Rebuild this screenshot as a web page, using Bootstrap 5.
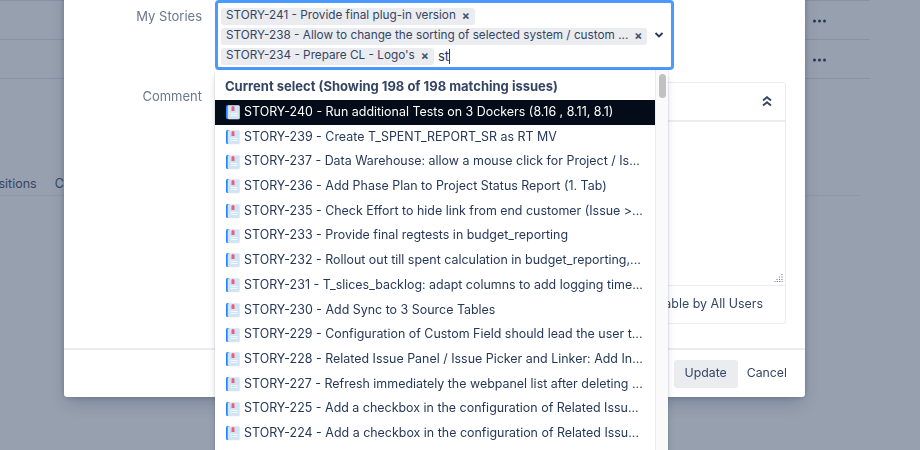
<!DOCTYPE html>
<html lang="en">
<head>
<meta charset="utf-8">
<title>Edit issue</title>
<link href="https://cdn.jsdelivr.net/npm/bootstrap@5.3.0/dist/css/bootstrap.min.css" rel="stylesheet">
<style>
html,body{height:450px;overflow:hidden}
body{background:#97a0af;font-family:Inter,"Liberation Sans",sans-serif;font-size:12.45px;color:#253858}
.bg-rows{width:870px}
.bg-row{height:39px;border-top:1px solid #8792a4;padding:18px 0 0 813px;line-height:0}
.bg-tabs{width:860px;height:39px;margin-top:40px;padding:19px 0 0;border-bottom:1px solid #8d97a7;color:#344563;overflow:hidden;white-space:nowrap;line-height:16px;font-size:12.5px}
.bg-tabs span:first-child{margin-left:-28px;margin-right:18px}
.dlg{position:fixed;left:64px;top:-20px;width:741px;height:417px;background:#fff;border-radius:3px;box-shadow:0 8px 16px -4px rgba(9,30,66,.25),0 0 5px rgba(9,30,66,.22);padding-top:20px}
.form-line{gap:13px}
.dlg-label{width:138px;text-align:right;color:#6b778c;font-size:13px;line-height:18px;flex:none}
.label-top{padding-top:7px}
.label-next{padding-top:5px}
.gap-above{margin-top:12px}
.picker{position:relative;width:459px;height:70px;border:3px solid #4c9aff;border-radius:4px;background:#fff;padding:3px 0 0 3px}
.chip{display:inline-flex;align-items:center;height:17px;background:#ebecf0;border-radius:3px;padding:0 5px;color:#344563;font-size:11.75px;white-space:nowrap;gap:6px}
.chip-line{height:20px;gap:4px}
.chip-x{font-size:12px;font-weight:700;color:#42526e;line-height:1}
.typed{font-size:13px;color:#253858;border-right:1px solid #253858;line-height:15px;height:15px}
.caret-box{position:absolute;right:7px;top:28px}
.editor{width:571px;height:242px;border:1px solid #ebecf0;border-radius:3px}
.ed-head{height:39px;border-bottom:2px solid #ebecf0;padding-right:13px}
.ed-body{height:164px;border-bottom:1px solid #ebecf0;position:relative}
.grip{position:absolute;right:2px;bottom:3px}
.ed-foot{height:37px;padding-right:22px;color:#344563;white-space:nowrap}
.dlg-foot{height:49px;border-top:2px solid #ebecf0;gap:6px;padding-right:18px;margin-top:24px}
.act{background:#ebecf0;border-radius:3px;padding:0;width:64px;height:28px;border:0;font-size:12.3px;color:#344563}
.act-link{background:none;border:0;padding:0 0 0 3px;font-size:12.3px;color:#344563}
.drop{position:fixed;left:215px;top:70px;width:453px;height:390px;background:#fff;box-shadow:0 4px 8px -2px rgba(9,30,66,.25),0 0 1px rgba(9,30,66,.31);overflow:hidden}
.drop-list{width:440px;flex:none}
.drop-head{height:30px;padding:7px 10px 0;font-weight:700;color:#344563;line-height:18px;font-size:13px}
.opt{height:24.7px;padding-left:10px;gap:3px;color:#253858;white-space:nowrap;overflow:hidden}
.opt.is-on{background:#030c18;color:#fff}
.opt svg{flex:none}
.rail{flex:1;background:#fafafa;border-left:1px solid #ededed;position:relative}
.thumb{position:absolute;left:3px;top:4px;width:7px;height:24px;border-radius:4px;background:#c1c1c1}
</style>
</head>
<body>
<div class="bg-rows">
  <div class="bg-row"><svg width="13" height="4" viewBox="0 0 13 4"><circle cx="1.500" cy="2" r="1.500" fill="#253858"/><circle cx="6.500" cy="2" r="1.500" fill="#253858"/><circle cx="11.500" cy="2" r="1.500" fill="#253858"/></svg></div>
  <div class="bg-row"><svg width="13" height="4" viewBox="0 0 13 4"><circle cx="1.500" cy="2" r="1.500" fill="#253858"/><circle cx="6.500" cy="2" r="1.500" fill="#253858"/><circle cx="11.500" cy="2" r="1.500" fill="#253858"/></svg></div>
  <div class="bg-row"></div>
</div>
<div class="bg-tabs"><span>Transitions</span><span>Comments</span></div>

<div class="dlg d-flex flex-column">
  <div class="d-flex form-line">
    <div class="dlg-label label-top">My Stories</div>
    <div class="picker">
      <div class="chip-line d-flex align-items-center"><span class="chip">STORY-241 - Provide final plug-in version <span class="chip-x">×</span></span></div>
      <div class="chip-line d-flex align-items-center"><span class="chip">STORY-238 - Allow to change the sorting of selected system / custom ... <span class="chip-x">×</span></span></div>
      <div class="chip-line d-flex align-items-center"><span class="chip">STORY-234 - Prepare CL - Logo's <span class="chip-x">×</span></span><span class="typed">st</span></div>
      <svg class="caret-box" width="10" height="8" viewBox="0 0 10 8"><path d="M1.500 2 5 5.500 8.500 2" fill="none" stroke="#253858" stroke-width="1.800"/></svg>
    </div>
  </div>
  <div class="d-flex form-line gap-above">
    <div class="dlg-label label-next">Comment</div>
    <div class="editor">
      <div class="ed-head d-flex justify-content-end align-items-center"><svg width="10" height="11" viewBox="0 0 10 11"><path d="M1 4.500 5 1.200 9 4.500M1 9.500 5 6.200 9 9.500" fill="none" stroke="#344563" stroke-width="1.900"/></svg></div>
      <div class="ed-body"><svg class="grip" width="9" height="9" viewBox="0 0 9 9"><path d="M8 1v8M5.500 3.500V9M3 6v3M.5 8.500h8" stroke="#6b778c" stroke-dasharray="1 1.500" fill="none"/></svg></div>
      <div class="ed-foot d-flex justify-content-end align-items-center">Viewable by All Users</div>
    </div>
  </div>
  <div class="dlg-foot d-flex justify-content-end align-items-center"><button class="btn act">Update</button><button class="btn act-link">Cancel</button></div>
</div>

<div class="drop d-flex">
  <div class="drop-list">
    <div class="drop-head">Current select (Showing 198 of 198 matching issues)</div>
    <div id="opts"></div>
  </div>
  <div class="rail"><div class="thumb"></div></div>
</div>

<script>
const items=["STORY-240 - Run additional Tests on 3 Dockers (8.16 , 8.11, 8.1)","STORY-239 - Create T_SPENT_REPORT_SR as RT MV","STORY-237 - Data Warehouse: allow a mouse click for Project / Is...","STORY-236 - Add Phase Plan to Project Status Report (1. Tab)","STORY-235 - Check Effort to hide link from end customer (Issue >...","STORY-233 - Provide final regtests in budget_reporting","STORY-232 - Rollout out till spent calculation in budget_reporting,...","STORY-231 - T_slices_backlog: adapt columns to add logging time...","STORY-230 - Add Sync to 3 Source Tables","STORY-229 - Configuration of Custom Field should lead the user t...","STORY-228 - Related Issue Panel / Issue Picker and Linker: Add In...","STORY-227 - Refresh immediately the webpanel list after deleting ...","STORY-225 - Add a checkbox in the configuration of Related Issu...","STORY-224 - Add a checkbox in the configuration of Related Issu..."];
const icon='<svg width="16" height="16" viewBox="0 0 16 16"><rect x="1" y="1" width="4" height="14" rx="1.500" fill="#2684ff"/><rect x="3" y="1.500" width="11.500" height="13.500" rx="1" fill="#cfe5f5" stroke="#dfe5ea" stroke-width=".6"/><path d="M5.500 9.500h7M5.500 11.500h7" stroke="#f2f8fc"/><path d="M6.500 7V3.500a1.500 1.500 0 0 1 3 0V7z" fill="#ef5c7d"/></svg>';
document.getElementById('opts').innerHTML=items.map((t,i)=>'<div class="opt d-flex align-items-center'+(i?'':' is-on')+'">'+icon+'<span>'+t+'</span></div>').join('');
</script>
<script src="https://cdn.jsdelivr.net/npm/bootstrap@5.3.0/dist/js/bootstrap.bundle.min.js"></script>
</body>
</html>
